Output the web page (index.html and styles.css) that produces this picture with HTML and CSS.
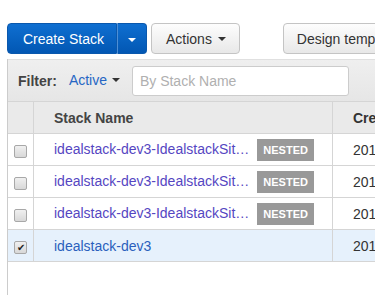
FILE: index.html
```html
<!DOCTYPE html>
<html lang="en">
<head>
  <meta charset="UTF-8">
  <title>Stacks</title>
  <link rel="stylesheet" href="styles.css">
</head>
<body>
  <div class="toolbar">
    <div class="split-btn">
      <button class="btn-primary">Create Stack</button>
      <button class="btn-primary btn-caret"><span class="caret white"></span></button>
    </div>
    <button class="btn">Actions <span class="caret"></span></button>
    <button class="btn btn-design">Design template</button>
  </div>

  <div class="panel">
    <div class="filter-bar">
      <span class="filter-label">Filter:</span>
      <span class="filter-active">Active <span class="caret"></span></span>
      <input type="text" class="filter-input" placeholder="By Stack Name">
    </div>

    <table class="stacks">
      <thead>
        <tr>
          <th class="col-check"></th>
          <th class="col-name">Stack Name</th>
          <th class="col-created">Created Time</th>
        </tr>
      </thead>
      <tbody>
        <tr>
          <td class="col-check"><span class="box"></span></td>
          <td class="col-name"><a class="visited">idealstack-dev3-IdealstackSit…</a><span class="badge">NESTED</span></td>
          <td class="col-created">2017-05-11</td>
        </tr>
        <tr>
          <td class="col-check"><span class="box"></span></td>
          <td class="col-name"><a class="visited">idealstack-dev3-IdealstackSit…</a><span class="badge">NESTED</span></td>
          <td class="col-created">2017-05-11</td>
        </tr>
        <tr>
          <td class="col-check"><span class="box"></span></td>
          <td class="col-name"><a class="visited">idealstack-dev3-IdealstackSit…</a><span class="badge">NESTED</span></td>
          <td class="col-created">2017-05-11</td>
        </tr>
        <tr class="selected">
          <td class="col-check"><span class="box checked">&#10004;</span></td>
          <td class="col-name"><a>idealstack-dev3</a></td>
          <td class="col-created">2017-05-11</td>
        </tr>
      </tbody>
    </table>
  </div>
</body>
</html>
```

FILE: styles.css
```css
body { margin: 0; font-family: "Liberation Sans", Arial, sans-serif; font-size: 14px; color: #333; background: #fff; overflow: hidden; }

.toolbar { display: flex; padding: 23px 0 0 7px; height: 31px; white-space: nowrap; }
.split-btn { display: flex; }
.btn-primary { height: 31px; padding: 0 0 0 15px; width: 110px; text-align: left; font: inherit; font-size: 14px; color: #fff; background: linear-gradient(#0f6fd1, #0257b3); border: 1px solid #0a58ad; border-radius: 4px 0 0 4px; }
.btn-caret { width: 30px; padding: 0; text-align: center; border-left: 1px solid #4d8fd6; border-radius: 0 4px 4px 0; }
.btn { height: 31px; margin-left: 4px; padding: 0 13px 0 14px; font: inherit; font-size: 14px; color: #333; background: linear-gradient(#fdfdfd, #e8e8e8); border: 1px solid #c4c4c4; border-radius: 4px; }
.btn-design { margin-left: 43px; padding: 0 13px; }

.caret { display: inline-block; width: 0; height: 0; margin-left: 2px; vertical-align: 3px; border-left: 4px solid transparent; border-right: 4px solid transparent; border-top: 4px solid #333; }
.caret.white { border-top-color: #fff; margin: 0; vertical-align: 2px; }

.panel { margin: 5px 0 0 7px; border-left: 1px solid #ccc; height: 240px; }
.filter-bar { display: flex; align-items: center; height: 41px; padding-left: 10px; background: linear-gradient(#efefef, #e6e6e6); border-top: 1px solid #e0e0e0; }
.filter-label { font-weight: bold; color: #444; font-size: 14px; }
.filter-active { margin-left: 12px; color: #2666c4; font-size: 14px; padding-bottom: 2px; }
.filter-active .caret { margin-left: 1px; }
.filter-input { margin-left: 12px; width: 217px; height: 30px; box-sizing: border-box; padding: 0 7px; border: 1px solid #ccc; border-radius: 3px; font: inherit; font-size: 14px; background: #fff; }
.filter-input::placeholder { color: #b0b0b0; }

.stacks { border-collapse: collapse; width: 460px; table-layout: fixed; }
.stacks th, .stacks td { height: 31px; padding: 0; border-bottom: 1px solid #d5d5d5; text-align: left; white-space: nowrap; overflow: hidden; }
.stacks th { background: #eaeaea; font-weight: bold; color: #444; border-top: 1px solid #d5d5d5; }
.stacks .col-check { width: 25px; border-right: 1px solid #d5d5d5; text-align: center; }
.stacks .col-name { width: 278px; padding-left: 20px; border-right: 1px solid #d5d5d5; }
.stacks .col-created { width: 140px; padding-left: 20px; color: #333; }

.stacks a { color: #2a5fbd; }
.stacks a.visited { color: #5546c2; }
.badge { display: inline-block; margin-left: 8px; padding: 0 6px; height: 22px; line-height: 23px; background: #999; color: #fff; font-size: 11px; font-weight: bold; }

.box { display: inline-block; width: 11px; height: 11px; margin-top: 2px; border: 1px solid #a8a8a8; border-radius: 2px; background: linear-gradient(#f0f0f0, #d8d8d8); vertical-align: middle; font-size: 10px; line-height: 12px; color: #222; }
.selected td { background: #e6f1fc; }
```
